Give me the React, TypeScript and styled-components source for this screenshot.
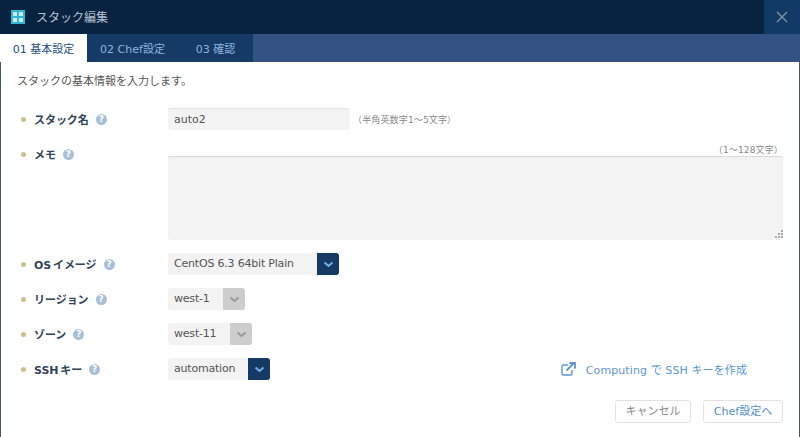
import React from 'react';
import styled, { createGlobalStyle } from 'styled-components';

const GlobalStyle = createGlobalStyle`
  html, body {
    margin: 0;
    padding: 0;
    background: #fff;
    font-family: 'DejaVu Sans', 'Noto Sans CJK JP', sans-serif;
  }
`;

const Dialog = styled.div`
  width: 800px;
  height: 437px;
  display: flex;
  flex-direction: column;
  overflow: hidden;
`;

const Header = styled.div`
  height: 34px;
  flex-shrink: 0;
  display: flex;
  align-items: center;
  background: #08233f;
  padding-left: 11px;
`;

const Title = styled.div`
  margin-left: 11px;
  margin-bottom: 2px;
  flex: 1;
  font-size: 12px;
  color: #b4c2d2;
`;

const CloseButton = styled.div`
  width: 36px;
  height: 34px;
  background: #123a66;
  display: flex;
  align-items: center;
  justify-content: center;
`;

const TabBar = styled.div`
  height: 28px;
  flex-shrink: 0;
  display: flex;
  background: #315282;
`;

const Tab = styled.div<{ $active?: boolean; $width: number }>`
  width: ${({ $width }) => $width}px;
  display: flex;
  align-items: center;
  justify-content: center;
  font-size: 11px;
  background: ${({ $active }) => ($active ? '#fff' : '#153a66')};
  color: ${({ $active }) => ($active ? '#24507f' : '#8fb4dc')};
`;

const Body = styled.div`
  flex: 1;
  display: flex;
  flex-direction: column;
  padding: 13px 16px 0 16px;
  border-left: 1px solid #4a5563;
  border-right: 1px solid #4a5563;
`;

const Lead = styled.div`
  font-size: 11px;
  line-height: 14px;
  color: #555;
  margin-bottom: 19px;
`;

const Row = styled.div<{ $top?: boolean; $mb: number }>`
  display: flex;
  align-items: ${({ $top }) => ($top ? 'flex-start' : 'center')};
  margin-bottom: ${({ $mb }) => $mb}px;
  min-height: 22px;
`;

const LabelCell = styled.div<{ $top?: boolean }>`
  width: 151px;
  flex-shrink: 0;
  display: flex;
  align-items: center;
  padding-left: 4px;
  box-sizing: border-box;
  margin-top: ${({ $top }) => ($top ? '-11px' : '0')};
  height: 22px;
`;

const Dot = styled.span`
  width: 5px;
  height: 5px;
  border-radius: 50%;
  background: #c9c08e;
  margin-right: 8px;
`;

const Label = styled.span`
  font-size: 11px;
  font-weight: bold;
  color: #33435a;
  word-spacing: -2px;
  letter-spacing: -0.05px;
`;

const Help = styled.span`
  width: 11px;
  height: 11px;
  border-radius: 50%;
  background: #a9c0d8;
  color: #fff;
  font-size: 9px;
  font-weight: bold;
  line-height: 11px;
  text-align: center;
  margin-left: 7px;
`;

const TextInput = styled.div`
  width: 182px;
  height: 22px;
  box-sizing: border-box;
  background: #f3f3f3;
  border-top: 1px solid #e2e2e2;
  border-radius: 3px;
  font-size: 11px;
  line-height: 21px;
  padding-left: 6px;
  color: #555;
`;

const Hint = styled.span`
  margin-left: 3px;
  font-size: 9px;
  letter-spacing: 0.15px;
  color: #888;
`;

const MemoColumn = styled.div`
  flex: 1;
  display: flex;
  flex-direction: column;
`;

const MemoHint = styled.div`
  height: 13px;
  margin-top: -11px;
  font-size: 9px;
  line-height: 14px;
  letter-spacing: 0.15px;
  color: #888;
  text-align: right;
`;

const Memo = styled.div`
  position: relative;
  height: 84px;
  box-sizing: border-box;
  background: #f3f3f3;
  border-top: 1px solid #d8d8d8;
  border-radius: 3px;
`;

const Grip = styled.svg`
  position: absolute;
  right: 0;
  bottom: 1px;
`;

const Select = styled.div<{ $width: number }>`
  width: ${({ $width }) => $width}px;
  height: 22px;
  display: flex;
  border-radius: 3px;
  overflow: hidden;
  background: #f3f3f3;
`;

const SelectText = styled.div`
  flex: 1;
  font-size: 11px;
  line-height: 22px;
  padding-left: 6px;
  color: #555;
  white-space: nowrap;
  letter-spacing: -0.2px;
`;

const Arrow = styled.div<{ $disabled?: boolean }>`
  width: 22px;
  flex-shrink: 0;
  display: flex;
  align-items: center;
  justify-content: center;
  background: ${({ $disabled }) => ($disabled ? '#cdcdcd' : '#153a66')};
  color: ${({ $disabled }) => ($disabled ? '#999' : '#6fb0e8')};
`;

const LinkArea = styled.div`
  margin-left: auto;
  margin-right: 36px;
  display: flex;
  align-items: center;
  font-size: 11px;
  letter-spacing: 0.1px;
  color: #5a97d0;
`;

const LinkIcon = styled.svg`
  margin-right: 10px;
`;

const Footer = styled.div`
  display: flex;
  justify-content: flex-end;
  gap: 12px;
`;

const FooterButton = styled.div<{ $primary?: boolean; $width: number }>`
  width: ${({ $width }) => $width}px;
  height: 23px;
  box-sizing: border-box;
  border: 1px solid #e2e2e2;
  border-radius: 3px;
  font-size: 11px;
  line-height: 21px;
  text-align: center;
  color: ${({ $primary }) => ($primary ? '#4f8cc7' : '#888')};
`;

function Chevron() {
  return (
    <svg width="11" height="7" viewBox="0 0 11 7">
      <path d="M1.5 1.5 L5.5 5 L9.5 1.5" fill="none" stroke="currentColor" strokeWidth="2" />
    </svg>
  );
}

function App(): JSX.Element {
  return (
    <Dialog>
      <GlobalStyle />
      <Header>
        <svg width="14" height="14" viewBox="0 0 14 14">
          <rect width="14" height="14" fill="#35b5d6" />
          <rect x="2" y="2" width="4" height="4" fill="#c5eef6" />
          <rect x="8" y="2" width="4" height="4" fill="#c5eef6" />
          <rect x="2" y="8" width="4" height="4" fill="#c5eef6" />
          <rect x="8" y="8" width="4" height="4" fill="#c5eef6" />
        </svg>
        <Title>スタック編集</Title>
        <CloseButton>
          <svg width="12" height="12" viewBox="0 0 12 12">
            <path d="M1 1 L11 11 M11 1 L1 11" stroke="#8496a8" strokeWidth="1.3" />
          </svg>
        </CloseButton>
      </Header>
      <TabBar>
        <Tab $active $width={87}>01 基本設定</Tab>
        <Tab $width={91}>02 Chef設定</Tab>
        <Tab $width={75}>03 確認</Tab>
      </TabBar>
      <Body>
        <Lead>スタックの基本情報を入力します。</Lead>
        <Row $mb={24}>
          <LabelCell><Dot /><Label>スタック名</Label><Help>?</Help></LabelCell>
          <TextInput>auto2</TextInput>
          <Hint>（半角英数字1～5文字）</Hint>
        </Row>
        <Row $top $mb={13}>
          <LabelCell $top><Dot /><Label>メモ</Label><Help>?</Help></LabelCell>
          <MemoColumn>
            <MemoHint>（1～128文字）</MemoHint>
            <Memo>
              <Grip width="10" height="10" viewBox="0 0 10 10">
                <path d="M8 1h2v2H8zM5 4h2v2H5zM8 4h2v2H8zM2 7h2v2H2zM5 7h2v2H5zM8 7h2v2H8z" fill="#aaa" />
              </Grip>
            </Memo>
          </MemoColumn>
        </Row>
        <Row $mb={13}>
          <LabelCell><Dot /><Label>OS イメージ</Label><Help>?</Help></LabelCell>
          <Select $width={171}>
            <SelectText>CentOS 6.3 64bit Plain</SelectText>
            <Arrow><Chevron /></Arrow>
          </Select>
        </Row>
        <Row $mb={13}>
          <LabelCell><Dot /><Label>リージョン</Label><Help>?</Help></LabelCell>
          <Select $width={77}>
            <SelectText>west-1</SelectText>
            <Arrow $disabled><Chevron /></Arrow>
          </Select>
        </Row>
        <Row $mb={13}>
          <LabelCell><Dot /><Label>ゾーン</Label><Help>?</Help></LabelCell>
          <Select $width={84}>
            <SelectText>west-11</SelectText>
            <Arrow $disabled><Chevron /></Arrow>
          </Select>
        </Row>
        <Row $mb={20}>
          <LabelCell><Dot /><Label>SSH キー</Label><Help>?</Help></LabelCell>
          <Select $width={102}>
            <SelectText>automation</SelectText>
            <Arrow><Chevron /></Arrow>
          </Select>
          <LinkArea>
            <LinkIcon width="15" height="14" viewBox="0 0 15 14">
              <path d="M7 3H2.5A1.5 1.5 0 0 0 1 4.500V11.500A1.500 1.500 0 0 0 2.500 13H9.500A1.500 1.500 0 0 0 11 11.500V8" fill="none" stroke="#5a97d0" strokeWidth="1.400" />
              <path d="M5.500 8.500L13 1M8.500 1H14V6.500" fill="none" stroke="#5a97d0" strokeWidth="1.800" />
            </LinkIcon>
            Computing で SSH キーを作成
          </LinkArea>
        </Row>
        <Footer>
          <FooterButton $width={76}>キャンセル</FooterButton>
          <FooterButton $primary $width={80}>Chef設定へ</FooterButton>
        </Footer>
      </Body>
    </Dialog>
  );
}

export default App;
